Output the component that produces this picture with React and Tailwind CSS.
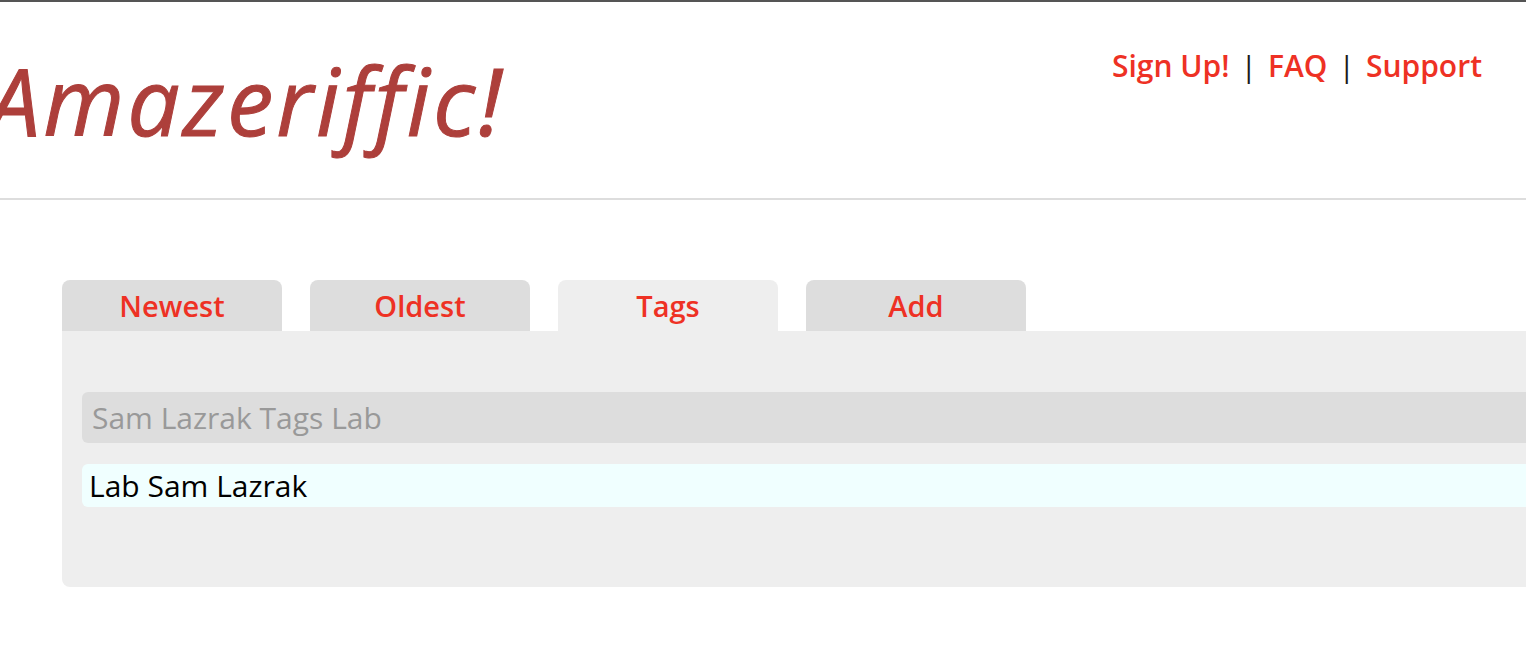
function App() {
  const tabs = [
    { label: "Newest", active: false },
    { label: "Oldest", active: false },
    { label: "Tags", active: true },
    { label: "Add", active: false },
  ];

  return (
    <div
      className="min-h-screen w-full overflow-hidden bg-white border-t-2 border-[#555555]"
      style={{ fontFamily: '"Open Sans", "Noto Sans", sans-serif' }}
    >
      <header className="h-[198px] border-b-2 border-[#dddddd] flex justify-between">
        <h1 className="ml-[-12px] mt-[38px] text-[93px] leading-[120px] italic text-[#ad3f3b] tracking-[3px] whitespace-nowrap [-webkit-text-stroke:1px_#ad3f3b]">
          Amazeriffic!
        </h1>
        <nav className="mr-[44px] mt-[42px] text-[30px] leading-[44px] font-semibold text-[#ee3124] flex gap-[11px] h-fit">
          <a href="#">Sign Up!</a>
          <span className="text-[#1a1a1a] font-normal">|</span>
          <a href="#">FAQ</a>
          <span className="text-[#1a1a1a] font-normal">|</span>
          <a href="#">Support</a>
        </nav>
      </header>

      <main className="pl-[62px] pt-[80px]">
        <div className="flex gap-[28px]">
          {tabs.map((t) => (
            <a
              key={t.label}
              href="#"
              className={
                t.active
                  ? "w-[220px] h-[51px] rounded-t-lg bg-[#eeeeee] flex justify-center items-center text-[29px] font-semibold text-[#ee3124]"
                  : "w-[220px] h-[51px] rounded-t-lg bg-[#dddddd] flex justify-center items-center text-[29px] font-semibold text-[#ee3124]"
              }
            >
              {t.label}
            </a>
          ))}
        </div>
        <div className="w-[1500px] h-[256px] bg-[#eeeeee] rounded-bl-lg pt-[61px] pl-[20px]">
          <div className="h-[51px] rounded-md bg-[#dddddd] flex items-center pl-[10px] text-[30px] text-[#999999]">
            Sam Lazrak Tags Lab
          </div>
          <div className="mt-[21px] h-[43px] rounded-md bg-[#f0ffff] flex items-center pl-[7px] text-[30px] text-black">
            Lab Sam Lazrak
          </div>
        </div>
      </main>
    </div>
  );
}

export default App;
